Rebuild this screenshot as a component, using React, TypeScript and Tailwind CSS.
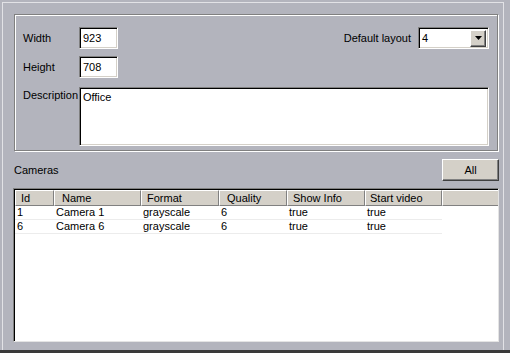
import React from "react";

const sunken =
  "border border-t-[#808080] border-l-[#808080] border-r-white border-b-white shadow-[inset_1px_1px_0_#000,inset_-1px_-1px_0_#d4d0c8] bg-white";
const raised =
  "border border-t-white border-l-white border-r-[#404040] border-b-[#404040] shadow-[inset_-1px_-1px_0_#808080] bg-[#d4d0c8]";

const cols = [
  { name: "Id", w: 39, pad: 5 },
  { name: "Name", w: 87, pad: 7 },
  { name: "Format", w: 78, pad: 5 },
  { name: "Quality", w: 68, pad: 7 },
  { name: "Show Info", w: 78, pad: 5 },
  { name: "Start video", w: 77, pad: 4 },
];

const rows = [
  ["1", "Camera 1", "grayscale", "6", "true", "true"],
  ["6", "Camera 6", "grayscale", "6", "true", "true"],
];

export default function App() {
  return (
    <div className="w-[510px] h-[353px] bg-[#b3b4bd] flex flex-col border-b-[3px] border-[#3a3a3a] font-['Liberation_Sans',Arial,sans-serif] text-[11px] text-black leading-none">
      <div className="flex-1 mt-[2px] ml-[2px] w-[502px] border-l border-t border-r border-[#e2e2e6] pl-[11px] pt-[11px] flex flex-col">
        {/* Group box */}
        <div className="w-[484px] h-[137px] border border-[#808080] shadow-[inset_1px_1px_0_#fff,1px_1px_0_#fff] flex flex-col pt-[12px] pl-[8px] pr-[8px]">
          <div className="flex items-center h-[22px]">
            <span className="w-[56px]">Width</span>
            <div className={`${sunken} w-[39px] h-[22px] flex items-center pl-[3px]`}>923</div>
            <div className="flex-1" />
            <span className="mr-[7px]">Default layout</span>
            <div className={`${sunken} w-[71px] h-[22px] flex items-center pl-[3px] pr-[2px]`}>
              <span className="flex-1">4</span>
              <div className={`${raised} w-[16px] h-[17px] flex items-center justify-center`}>
                <svg width="7" height="4" viewBox="0 0 7 4">
                  <path d="M0 0h7L3.5 4z" fill="#000" />
                </svg>
              </div>
            </div>
          </div>
          <div className="flex items-center h-[22px] mt-[7px]">
            <span className="w-[56px]">Height</span>
            <div className={`${sunken} w-[39px] h-[22px] flex items-center pl-[3px]`}>708</div>
          </div>
          <div className="flex mt-[9px]">
            <span className="w-[56px] pt-[3px]">Description</span>
            <div className={`${sunken} w-[411px] h-[59px] pl-[3px] pt-[4px]`}>Office</div>
          </div>
        </div>

        {/* Cameras row */}
        <div className="w-[485px] flex items-center justify-between mt-[8px]">
          <span className="pl-[0px]">Cameras</span>
          <div className={`${raised} w-[57px] h-[22px] flex items-center justify-center`}>All</div>
        </div>

        {/* Table */}
        <div className="-ml-[1px] mt-[7px] w-[486px] h-[154px] border border-t-[#808080] border-l-[#808080] border-r-[#e4e4e4] border-b-[#e4e4e4] shadow-[inset_1px_1px_0_#000] bg-white pt-[1px] pl-[1px]">
          <div className="flex h-[16px]">
            {cols.map((c) => (
              <div
                key={c.name}
                style={{ width: c.w, paddingLeft: c.pad }}
                className="h-[16px] bg-[#d4d0c8] border-t border-l border-white border-r border-r-[#808080] border-b border-b-[#808080] flex items-center"
              >
                {c.name}
              </div>
            ))}
            <div className="flex-1 h-[16px] bg-[#d4d0c8] border-t border-l border-white border-b border-b-[#808080]" />
          </div>
          {rows.map((r, i) => (
            <div key={i} className="flex h-[14px] w-[427px] border-b border-[#ececec]">
              {r.map((v, j) => (
                <div key={j} style={{ width: cols[j].w }} className="pl-[2px] flex items-center">
                  {v}
                </div>
              ))}
            </div>
          ))}
        </div>
      </div>
    </div>
  );
}
